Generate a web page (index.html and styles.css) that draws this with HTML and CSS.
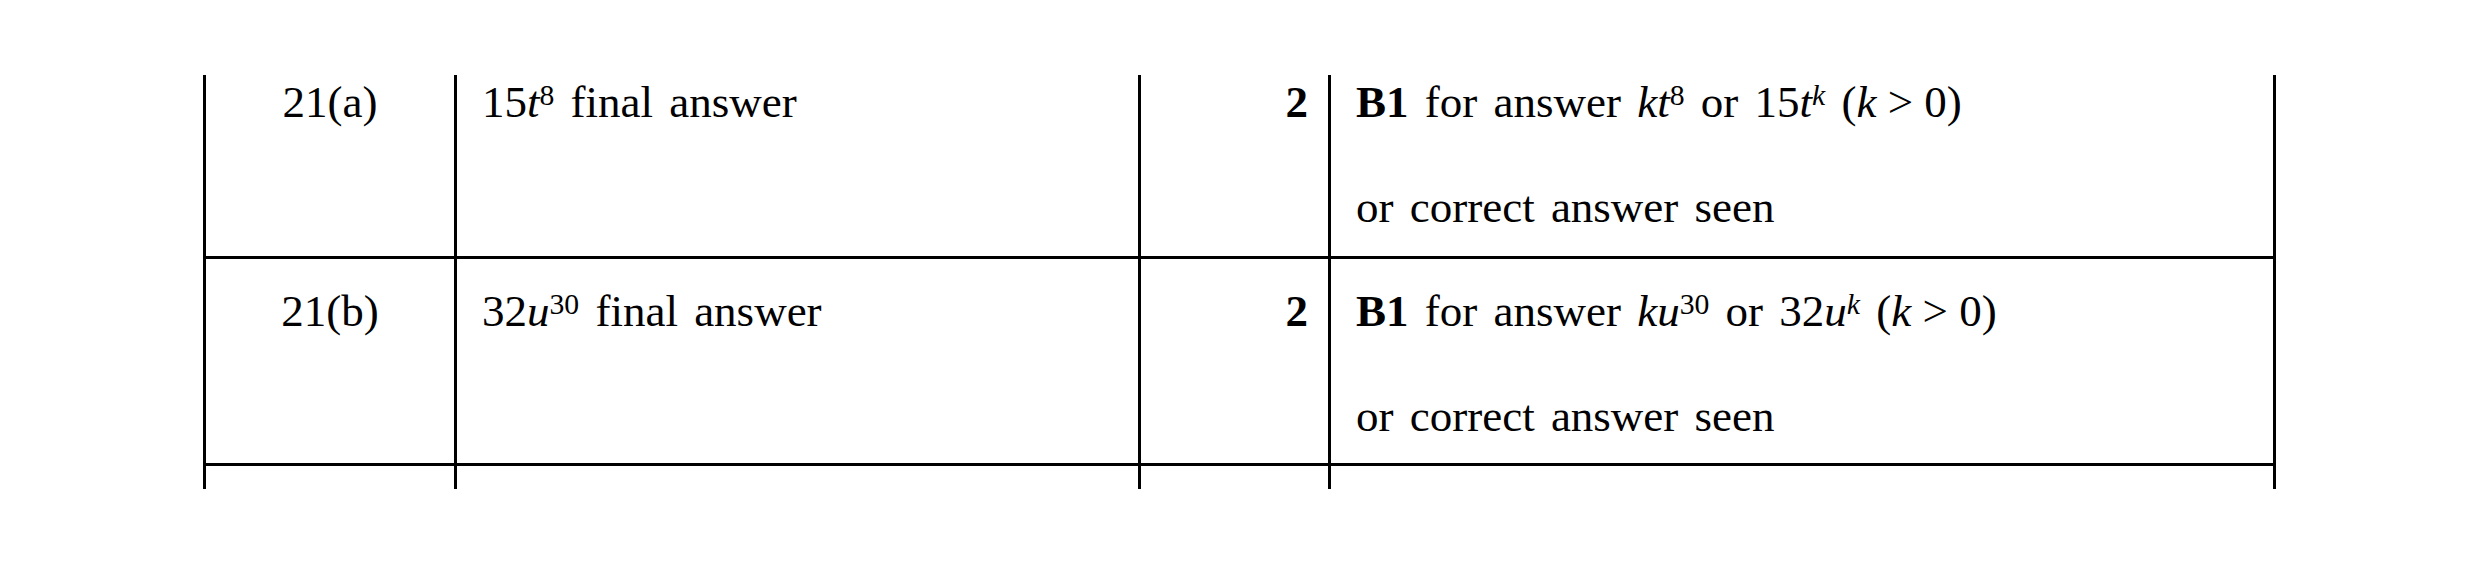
FILE: index.html
```html
<!DOCTYPE html>
<html>
<head>
<meta charset="utf-8">
<link rel="stylesheet" href="styles.css">
</head>
<body>
<div class="page">
  <div class="grid">
    <div class="cell num first">21(a)</div>
    <div class="cell ans first"><p>15<i>t</i><sup>8</sup> final answer</p></div>
    <div class="cell mark first"><b>2</b></div>
    <div class="cell notes first">
      <p><b>B1</b> for answer <i>kt</i><sup>8</sup> or 15<i>t<sup>k</sup></i> <span class="cond">(<i>k</i> &gt; 0)</span></p>
      <p>or correct answer seen</p>
    </div>

    <div class="cell num">21(b)</div>
    <div class="cell ans"><p>32<i>u</i><sup>30</sup> final answer</p></div>
    <div class="cell mark"><b>2</b></div>
    <div class="cell notes">
      <p><b>B1</b> for answer <i>ku</i><sup>30</sup> or 32<i>u<sup>k</sup></i> <span class="cond">(<i>k</i> &gt; 0)</span></p>
      <p>or correct answer seen</p>
    </div>

    <div class="cell"></div>
    <div class="cell"></div>
    <div class="cell"></div>
    <div class="cell"></div>
  </div>
</div>
</body>
</html>
```

FILE: styles.css
```css
html, body {
  margin: 0;
  padding: 0;
  background: #ffffff;
}

body {
  font-family: "Liberation Serif", "Times New Roman", serif;
  font-size: 45px;
  color: #000000;
}

.page {
  padding: 75px 0 0 203px;
}

.grid {
  display: grid;
  width: 2067px;
  padding: 0 3px;
  background: #000000;
  grid-template-columns: 248px 681px 187px 942px;
  grid-template-rows: 181px 204px 23px;
  column-gap: 3px;
  row-gap: 3px;
}

.cell {
  background: #ffffff;
  padding-top: 27px;
  line-height: 50px;
  word-spacing: 5px;
}

.cell.first {
  padding-top: 2px;
}

.cell p {
  margin: 0;
}

.cell p + p {
  margin-top: 55px;
}

.num {
  text-align: center;
}

.ans {
  padding-left: 25px;
}

.mark {
  text-align: right;
  padding-right: 20px;
}

.notes {
  padding-left: 25px;
}

.cond {
  word-spacing: 0;
}

sup {
  font-size: 0.66em;
  line-height: 0;
  vertical-align: 0.42em;
}

i sup {
  font-style: italic;
}
```
